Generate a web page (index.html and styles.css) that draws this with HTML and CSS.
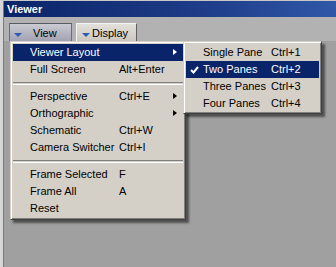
FILE: index.html
```html
<!DOCTYPE html>
<html lang="en">
<head>
    <meta charset="UTF-8">
    <title>Viewer</title>
    <link rel="stylesheet" href="styles.css">
</head>
<body>
    <div class="window">
        <div class="titlebar">Viewer</div>
        <div class="toolbar">
            <div class="tool-btn pressed">
                <svg class="drop" width="8" height="5" viewBox="0 0 8 5"><path d="M0 0 H8 L4 4 Z" fill="#2a5db0"/></svg>
                <span>View</span>
            </div>
            <div class="tool-btn display">
                <svg class="drop" width="8" height="5" viewBox="0 0 8 5"><path d="M0 0 H8 L4 4 Z" fill="#2a5db0"/></svg>
                <span>Display</span>
            </div>
        </div>
        <div class="viewport">
            <!-- menu principal -->
            <div class="menu main-menu">
                <div class="item active"><span class="label">Viewer Layout</span><span class="key"></span><span class="sub"></span></div>
                <div class="item"><span class="label">Full Screen</span><span class="key">Alt+Enter</span></div>
                <div class="sep"></div>
                <div class="item"><span class="label">Perspective</span><span class="key">Ctrl+E</span><span class="sub"></span></div>
                <div class="item"><span class="label">Orthographic</span><span class="key"></span><span class="sub"></span></div>
                <div class="item"><span class="label">Schematic</span><span class="key">Ctrl+W</span></div>
                <div class="item"><span class="label">Camera Switcher</span><span class="key">Ctrl+I</span></div>
                <div class="sep"></div>
                <div class="item"><span class="label">Frame Selected</span><span class="key">F</span></div>
                <div class="item"><span class="label">Frame All</span><span class="key">A</span></div>
                <div class="item"><span class="label">Reset</span></div>
            </div>

            <!-- submenu do layout -->
            <div class="menu sub-menu">
                <div class="item"><span class="label">Single Pane</span><span class="key">Ctrl+1</span></div>
                <div class="item active">
                    <svg class="check" width="9" height="8" viewBox="0 0 9 8"><path d="M1 4 L3.5 6.5 L8 1" stroke="#fff" stroke-width="2" fill="none"/></svg>
                    <span class="label">Two Panes</span><span class="key">Ctrl+2</span>
                </div>
                <div class="item"><span class="label">Three Panes</span><span class="key">Ctrl+3</span></div>
                <div class="item"><span class="label">Four Panes</span><span class="key">Ctrl+4</span></div>
            </div>
        </div>
    </div>
</body>
</html>
```

FILE: styles.css
```css
body {
    margin: 0;
    font-family: 'Liberation Sans', Arial, sans-serif;
    font-size: 11px;
    background-color: #a0a0a0;
}

.window {
    display: flex;
    flex-direction: column;
    height: 266px;
    border-top: 1px solid #c8c8c8;
    border-left: 3px solid #d6d6d6;
    box-shadow: inset 1px 0 0 #7a7a7a;
    padding-left: 1px;
}

.titlebar {
    height: 16px;
    line-height: 16px;
    padding-left: 3px;
    color: #fff;
    font-weight: bold;
    background: linear-gradient(to right, #0a2468, #1e3c88 60%, #3058a8);
}

.toolbar {
    display: flex;
    gap: 4px;
    height: 24px;
    padding: 6px 0 0 5px;
    box-sizing: border-box;
    background-color: #b2b2b2;
}

.tool-btn {
    display: flex;
    align-items: center;
    height: 19px;
    box-sizing: border-box;
    padding-left: 4px;
}

.tool-btn .drop {
    margin-top: 6px;
}

.tool-btn.pressed {
    width: 63px;
    background: linear-gradient(#cacad2, #a2a2b2);
    border: 1px solid #6c6c78;
    border-top-color: #5a5a66;
}

.tool-btn.pressed span {
    margin-left: 11px;
}

.tool-btn.display {
    width: 61px;
    padding-left: 5px;
    background: linear-gradient(#e2e0da, #ccc8c0);
    border: 1px solid;
    border-color: #f4f4f4 #606060 #606060 #f4f4f4;
}

.tool-btn.display span {
    margin-left: 2px;
}

.viewport {
    position: relative;
    flex: 1;
    background-color: #a0a0a0;
}

.menu {
    position: absolute;
    background-color: #d4d0c8;
    border: 1px solid;
    border-color: #d4d0c8 #404040 #404040 #d4d0c8;
    box-shadow: inset 1px 1px 0 #fff, inset -1px -1px 0 #808080, 3px 3px 2px rgba(0, 0, 0, 0.5);
    padding: 2px;
}

.main-menu {
    left: 6px;
    top: 0;
    width: 170px;
}

.sub-menu {
    left: 179px;
    top: 0;
    width: 133px;
    padding-bottom: 1px;
}

.item {
    position: relative;
    display: flex;
    height: 17px;
    line-height: 17px;
    padding-left: 17px;
    color: #000;
}

.item.active {
    background-color: #0a246a;
    color: #fff;
}

.main-menu .label {
    width: 89px;
}

.sub-menu .label {
    width: 68px;
}

.sub {
    position: absolute;
    right: 6px;
    top: 5px;
    width: 0;
    height: 0;
    border-top: 3.5px solid transparent;
    border-bottom: 3.5px solid transparent;
    border-left: 4px solid #000;
}

.item.active .sub {
    border-left-color: #fff;
}

.check {
    position: absolute;
    left: 4px;
    top: 5px;
}

.sep {
    height: 1px;
    margin: 4px 0 3px;
    border-top: 1px solid #808080;
    border-bottom: 1px solid #fff;
}
```
